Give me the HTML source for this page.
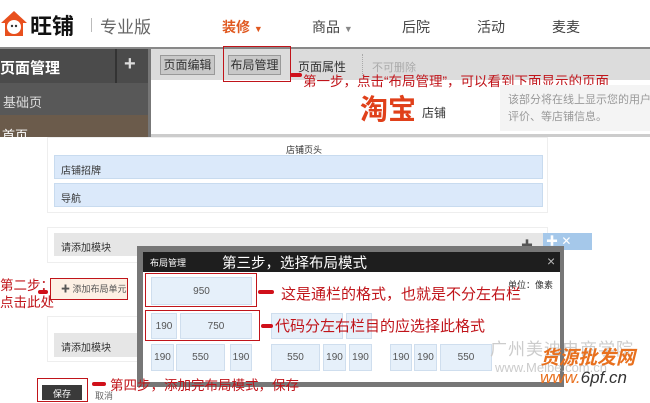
<!DOCTYPE html>
<html><head><meta charset="utf-8"><style>
*{margin:0;padding:0;box-sizing:border-box}
body{width:650px;height:400px;overflow:hidden;background:#fff;position:relative;font-family:"Liberation Sans","Noto Sans CJK SC",sans-serif;font-size:12px;color:#333}
.a{position:absolute;white-space:nowrap}
.red{color:#c0141a}
.cell{position:absolute;background:#e6f0fa;border:1px solid #cfdeee;color:#555;font-size:10px;display:flex;align-items:center;justify-content:center}
.rb{position:absolute;border:1.5px solid #c0141a}
.arr{position:absolute;height:4px;background:#d0101a;border-radius:2px}
</style></head><body>
<!-- header -->
<div class="a" style="left:0;top:8px;width:28px;height:30px">
<svg width="28" height="30"><path d="M1 15 L14 3 L27 15 L23 15 L23 28 L5 28 L5 15Z" fill="#e8501e"/><circle cx="14" cy="19" r="7" fill="#fff"/><circle cx="12" cy="18" r="1.2" fill="#333"/><circle cx="16" cy="18" r="1.2" fill="#333"/></svg></div>
<div class="a" style="left:30px;top:9px;font-size:22px;font-weight:bold;color:#111">旺铺</div>
<div class="a" style="left:91px;top:18px;width:1px;height:14px;background:#bbb"></div>
<div class="a" style="left:100px;top:13px;font-size:17px;color:#666">专业版</div>
<div class="a" style="left:222px;top:17px;font-size:14px;font-weight:bold;color:#e0581f">装修 <span style="font-size:9px">▼</span></div>
<div class="a" style="left:312px;top:17px;font-size:14px;color:#444">商品 <span style="font-size:9px;color:#888">▼</span></div>
<div class="a" style="left:402px;top:17px;font-size:14px;color:#444">后院</div>
<div class="a" style="left:477px;top:17px;font-size:14px;color:#444">活动</div>
<div class="a" style="left:552px;top:17px;font-size:14px;color:#444">麦麦</div>
<div class="a" style="left:0;top:47px;width:650px;height:2px;background:#888"></div>
<!-- sidebar -->
<div class="a" style="left:0;top:49px;width:148px;height:34px;background:#4b4b4b"></div>
<div class="a" style="left:0;top:57px;font-size:15px;font-weight:bold;color:#fff">页面管理</div>
<div class="a" style="left:115px;top:49px;width:2px;height:34px;background:#333"></div>
<div class="a" style="left:124px;top:53px;font-size:20px;font-weight:bold;color:#ddd">+</div>
<div class="a" style="left:0;top:83px;width:148px;height:32px;background:#585858"></div>
<div class="a" style="left:3px;top:92px;font-size:13px;color:#ddd">基础页</div>
<div class="a" style="left:0;top:115px;width:148px;height:22px;background:#6b5b4b"></div>
<div class="a" style="left:2px;top:125px;font-size:13px;color:#fff">首页</div>
<div class="a" style="left:148px;top:49px;width:3px;height:88px;background:#777"></div>
<!-- toolbar -->
<div class="a" style="left:151px;top:49px;width:499px;height:31px;background:#dcdcdc"></div>
<div class="a" style="left:160px;top:55px;width:55px;height:20px;background:#c8c8c8;border:1px solid #999;font-size:12px;text-align:center;line-height:18px">页面编辑</div>
<div class="a" style="left:228px;top:55px;width:53px;height:20px;background:#c8c8c8;border:1px solid #999;font-size:12px;text-align:center;line-height:18px">布局管理</div>
<div class="rb" style="left:223px;top:46px;width:68px;height:36px"></div>
<div class="a" style="left:298px;top:58px;font-size:12px">页面属性</div>
<div class="a" style="left:362px;top:54px;height:22px;border-left:1px dotted #aaa"></div>
<div class="a" style="left:372px;top:59px;font-size:11px;color:#aaa">不可删除</div>
<div class="arr" style="left:290px;top:73px;width:12px"></div>
<div class="a red" style="left:303px;top:70px;font-size:13.5px">第一步，点击“布局管理”，可以看到下面显示的页面</div>
<div class="a" style="left:360px;top:88px;font-size:28px;font-weight:bold;color:#e0401a">淘宝</div>
<div class="a" style="left:422px;top:104px;font-size:12px;color:#333">店铺</div>
<div class="a" style="left:500px;top:85px;width:150px;height:46px;background:#f4f4f4"></div>
<div class="a" style="left:508px;top:92px;font-size:11px;color:#999;line-height:17px">该部分将在线上显示您的用户<br>评价、等店铺信息。</div>
<div class="a" style="left:151px;top:134px;width:499px;height:3px;background:#ccc"></div>
<!-- panel 1 -->
<div class="a" style="left:47px;top:137px;width:501px;height:76px;border:1px solid #eee"></div>
<div class="a" style="left:286px;top:143px;font-size:9px">店铺页头</div>
<div class="a" style="left:54px;top:155px;width:489px;height:24px;background:#dbe9fa;border:1px solid #c8dbef"></div>
<div class="a" style="left:61px;top:162px;font-size:10px">店铺招牌</div>
<div class="a" style="left:54px;top:183px;width:489px;height:24px;background:#dbe9fa;border:1px solid #c8dbef"></div>
<div class="a" style="left:61px;top:190px;font-size:10px">导航</div>
<!-- panel 2 -->
<div class="a" style="left:47px;top:227px;width:501px;height:36px;border:1px solid #eee"></div>
<div class="a" style="left:54px;top:233px;width:489px;height:23px;background:#e6e6e6"></div>
<div class="a" style="left:61px;top:239px;font-size:10px">请添加模块</div>
<div class="a" style="left:543px;top:233px;width:49px;height:17px;background:#a5c8ea;color:#fff;font-size:12px;padding-left:3px;line-height:17px">✚ ✕</div>
<div class="a" style="left:521px;top:236px;font-size:12px;color:#555">✚</div>
<!-- step 2 -->
<div class="a red" style="left:0;top:277px;font-size:13.5px;line-height:17px">第二步：<br>点击此处</div>
<div class="arr" style="left:38px;top:290px;width:10px"></div>
<div class="a" style="left:50px;top:278px;width:78px;height:22px;background:#fdf0e4;border:1px solid #c0141a;font-size:9px;line-height:20px;padding-left:10px;color:#555">✚ 添加布局单元</div>
<!-- panel 3 -->
<div class="a" style="left:47px;top:316px;width:501px;height:46px;border:1px solid #eee"></div>
<div class="a" style="left:54px;top:333px;width:489px;height:24px;background:#e6e6e6"></div>
<div class="a" style="left:61px;top:339px;font-size:10px">请添加模块</div>
<!-- modal -->
<div class="a" style="left:137px;top:246px;width:427px;height:141px;background:#777"></div>
<div class="a" style="left:143px;top:252px;width:417px;height:20px;background:#1e1e1e"></div>
<div class="a" style="left:150px;top:256px;font-size:9px;color:#fff">布局管理</div>
<div class="a" style="left:222px;top:252px;font-size:14.5px;color:#fff">第三步，选择布局模式</div>
<div class="a" style="left:547px;top:253px;font-size:14px;color:#bbb">×</div>
<div class="a" style="left:143px;top:272px;width:417px;height:110px;background:#fff"></div>
<div class="a" style="left:508px;top:278px;font-size:9px;color:#333">单位：像素</div>
<div class="cell" style="left:151px;top:277px;width:101px;height:28px">950</div>
<div class="rb" style="left:145px;top:273px;width:112px;height:34px"></div>
<div class="arr" style="left:258px;top:290px;width:16px"></div>
<div class="a red" style="left:281px;top:283px;font-size:15px">这是通栏的格式，也就是不分左右栏</div>
<div class="cell" style="left:151px;top:313px;width:26px;height:26px">190</div>
<div class="cell" style="left:180px;top:313px;width:72px;height:26px">750</div>
<div class="cell" style="left:271px;top:313px;width:72px;height:26px"></div>
<div class="cell" style="left:346px;top:313px;width:26px;height:26px"></div>
<div class="rb" style="left:145px;top:310px;width:115px;height:31px"></div>
<div class="arr" style="left:261px;top:324px;width:12px"></div>
<div class="a red" style="left:275px;top:315px;font-size:15px">代码分左右栏目的应选择此格式</div>
<div class="cell" style="left:151px;top:344px;width:23px;height:27px">190</div>
<div class="cell" style="left:176px;top:344px;width:49px;height:27px">550</div>
<div class="cell" style="left:230px;top:344px;width:22px;height:27px">190</div>
<div class="cell" style="left:271px;top:344px;width:49px;height:27px">550</div>
<div class="cell" style="left:323px;top:344px;width:23px;height:27px">190</div>
<div class="cell" style="left:349px;top:344px;width:23px;height:27px">190</div>
<div class="cell" style="left:390px;top:344px;width:22px;height:27px">190</div>
<div class="cell" style="left:414px;top:344px;width:23px;height:27px">190</div>
<div class="cell" style="left:440px;top:344px;width:52px;height:27px">550</div>
<!-- step 4 -->
<div class="a" style="left:42px;top:385px;width:40px;height:15px;background:#3a3a3a;color:#fff;font-size:9px;text-align:center;line-height:18px">保存</div>
<div class="rb" style="left:37px;top:378px;width:51px;height:24px"></div>
<div class="a" style="left:95px;top:389px;font-size:9px;color:#666">取消</div>
<div class="arr" style="left:92px;top:382px;width:14px"></div>
<div class="a red" style="left:110px;top:374px;font-size:13.5px">第四步，添加完布局模式，保存</div>
<!-- watermarks -->
<div class="a" style="left:490px;top:335px;font-size:17px;color:#ccc;letter-spacing:1px">广州美迪电商学院</div>
<div class="a" style="left:495px;top:360px;font-size:13px;color:#ccc">www.Meibe.com.cn</div>
<div class="a" style="left:540px;top:343px;font-size:19px;font-weight:bold;color:#e8701e;font-style:italic">货源批发网</div>
<div class="a" style="left:540px;top:368px;font-size:17px;color:#e8701e;font-style:italic">www.<span style="color:#333">6pf.cn</span></div>
</body></html>
